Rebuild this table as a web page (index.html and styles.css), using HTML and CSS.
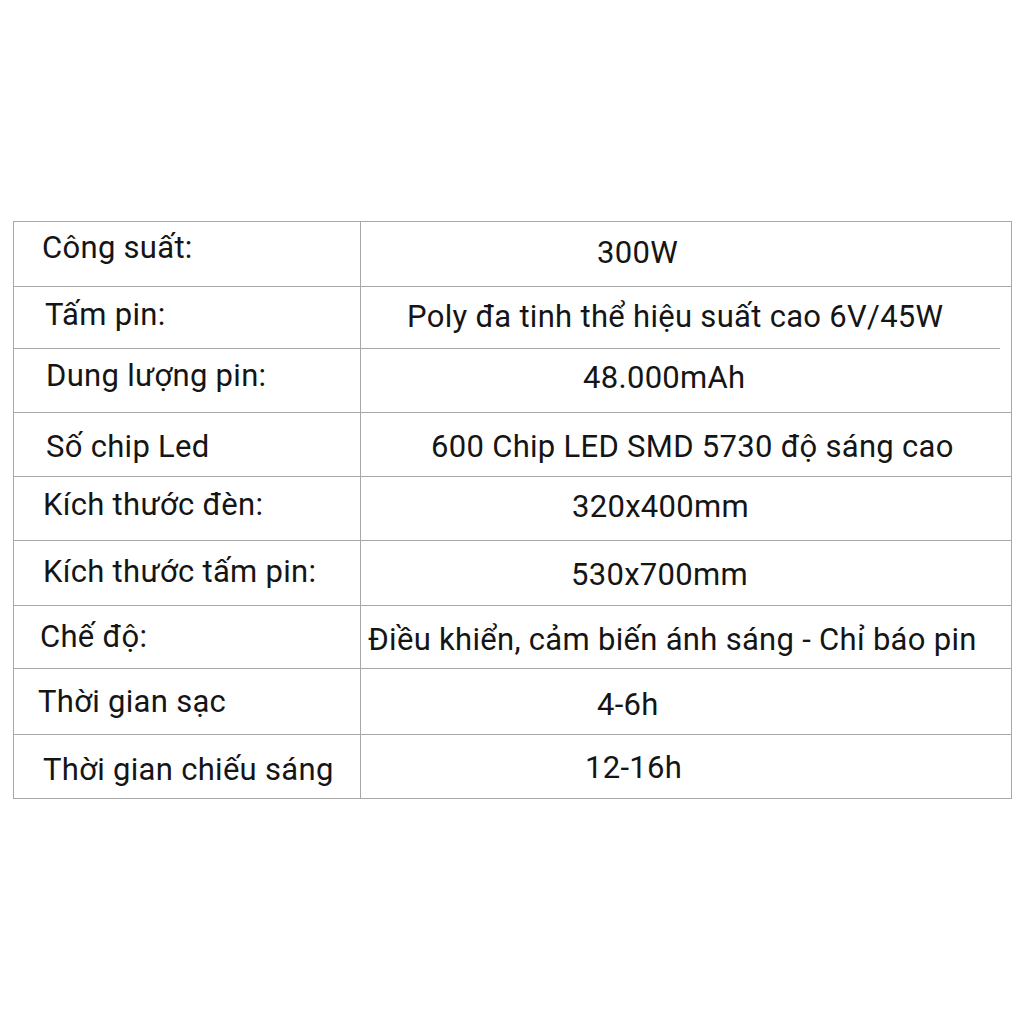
FILE: index.html
```html
<!DOCTYPE html>
<html lang="vi">
<head>
<meta charset="utf-8">
<link rel="stylesheet" href="styles.css">
</head>
<body>
<div class="spec">
  <div class="row r1"><div class="k k1">Công suất:</div><div class="v v1">300W</div></div>
  <div class="row r2 split"><div class="k k2">Tấm pin:</div><div class="v v2">Poly đa tinh thể hiệu suất cao 6V/45W</div></div>
  <div class="row r3"><div class="k k3">Dung lượng pin:</div><div class="v v3">48.000mAh</div></div>
  <div class="row r4"><div class="k k4">Số chip Led</div><div class="v v4">600 Chip LED SMD 5730 độ sáng cao</div></div>
  <div class="row r5"><div class="k k5">Kích thước đèn:</div><div class="v v5">320x400mm</div></div>
  <div class="row r6"><div class="k k6">Kích thước tấm pin:</div><div class="v v6">530x700mm</div></div>
  <div class="row r7"><div class="k k7">Chế độ:</div><div class="v v7">Điều khiển, cảm biến ánh sáng - Chỉ báo pin</div></div>
  <div class="row r8"><div class="k k8">Thời gian sạc</div><div class="v v8">4-6h</div></div>
  <div class="row r9"><div class="k k9">Thời gian chiếu sáng</div><div class="v v9">12-16h</div></div>
</div>
</body>
</html>
```

FILE: styles.css
```css
html, body {
  margin: 0;
  padding: 0;
  background: #ffffff;
}
body {
  width: 1024px;
  height: 1024px;
  padding-top: 221px;
  box-sizing: border-box;
  font-family: Roboto, "Noto Sans", sans-serif;
  color: #151515;
}
.spec {
  margin-left: 13px;
  width: 999px;
  box-sizing: border-box;
  border: 1px solid #a8a8a8;
  display: flex;
  flex-direction: column;
}
.row {
  display: grid;
  grid-template-columns: 347px 1fr;
  border-bottom: 1px solid #a8a8a8;
  box-sizing: border-box;
}
.row.r9 { border-bottom: none; }
.row.split { border-bottom: none; }
.split .k, .split .v { border-bottom: 1px solid #a8a8a8; }
.split .v { margin-right: 11px; }
.k, .v {
  font-size: 31px;
  font-weight: 400;
  letter-spacing: 0.3px;
  line-height: 1;
  box-sizing: border-box;
  white-space: nowrap;
}
.k { border-right: 1px solid #a8a8a8; }
.r1 { height: 65px; }
.r2 { height: 62px; }
.r3 { height: 64px; }
.r4 { height: 64px; }
.r5 { height: 64px; }
.r6 { height: 65px; }
.r7 { height: 63px; }
.r8 { height: 66px; }
.r9 { height: 63px; }
.k1 { padding: 10px 0 0 28px; }
.k2 { padding: 12px 0 0 31px; }
.k3 { padding: 11px 0 0 32px; }
.k4 { padding: 18px 0 0 32px; }
.k5 { padding: 12px 0 0 29px; }
.k6 { padding: 15px 0 0 29px; }
.k7 { padding: 15px 0 0 26px; }
.k8 { padding: 17px 0 0 24px; }
.k9 { padding: 19px 0 0 29px; }
.v1 { padding: 15px 0 0 236px; }
.v2 { padding: 14px 0 0 46px; }
.v3 { padding: 13px 0 0 222px; }
.v4 { padding: 18px 0 0 70px; }
.v5 { padding: 14px 0 0 211px; }
.v6 { padding: 18px 0 0 210px; }
.v7 { padding: 18px 0 0 7px; }
.v8 { padding: 20px 0 0 236px; }
.v9 { padding: 17px 0 0 224px; }
```
